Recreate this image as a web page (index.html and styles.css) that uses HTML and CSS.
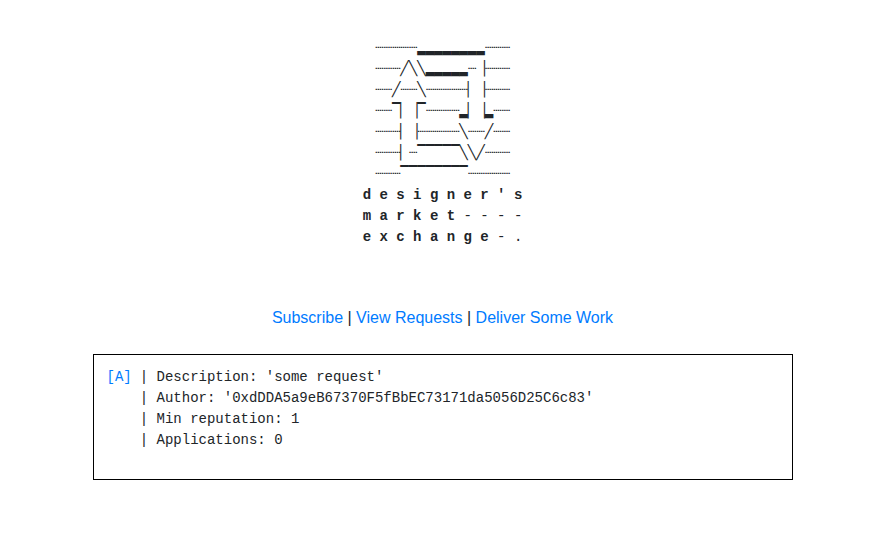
FILE: index.html
```html
<!DOCTYPE html>
<html lang="en">
<head>
<meta charset="utf-8">
<meta name="viewport" content="width=device-width, initial-scale=1">
<title>designer's market exchange</title>
<link rel="stylesheet" href="styles.css">
</head>
<body>
<header>
<pre class="banner">┈┈┈┈┈▂▂▂▂▂▂▂▂┈┈┈
┈┈┈╱╲╲▂▂▂▂▂┈▕┈┈┈
┈┈╱┈┈╲┈┈┈┈┈▏▕┈┈┈
┈┈▔▏▕▔┈┈┈┈▂▏▕▂┈┈
┈┈┈▏▕┈┈┈┈┈╲┈┈╱┈┈
┈┈┈▏┈▔▔▔▔▔╲╲╱┈┈┈
┈┈┈▔▔▔▔▔▔▔▔┈┈┈┈┈
<b>d e s i g n e r ' s</b>
<b>m a r k e t</b> - - - -
<b>e x c h a n g e</b> - .</pre>
</header>
<nav class="menu"><a href="#subscribe">Subscribe</a> | <a href="#requests">View Requests</a> | <a href="#deliver">Deliver Some Work</a></nav>
<main class="request">
<a class="apply" href="#apply">[A]</a>
<pre class="details">| Description: 'some request'
| Author: '0xdDDA5a9eB67370F5fBbEC73171da5056D25C6c83'
| Min reputation: 1
| Applications: 0</pre>
</main>
</body>
</html>
```

FILE: styles.css
```css
*,
*::before,
*::after {
  box-sizing: border-box;
}

body {
  margin: 0;
  padding: 38px 16px;
  background: #fff;
  color: #212529;
  font: 16px/24px "Liberation Sans", Arial, sans-serif;
}

pre,
.apply {
  margin: 0;
  font: 14px/21px "Liberation Mono", "Courier New", monospace;
}

a {
  color: #007bff;
  text-decoration: none;
}

a:hover {
  text-decoration: underline;
}

.banner {
  text-align: center;
}

.menu {
  margin: 58px 0 24px;
  text-align: center;
}

.request {
  display: flex;
  align-items: flex-start;
  gap: 8px;
  max-width: 700px;
  margin: 0 auto;
  padding: 12px 13px 28px;
  border: 1px solid #000;
}

.details {
  min-width: 0;
  overflow-x: auto;
}
```
